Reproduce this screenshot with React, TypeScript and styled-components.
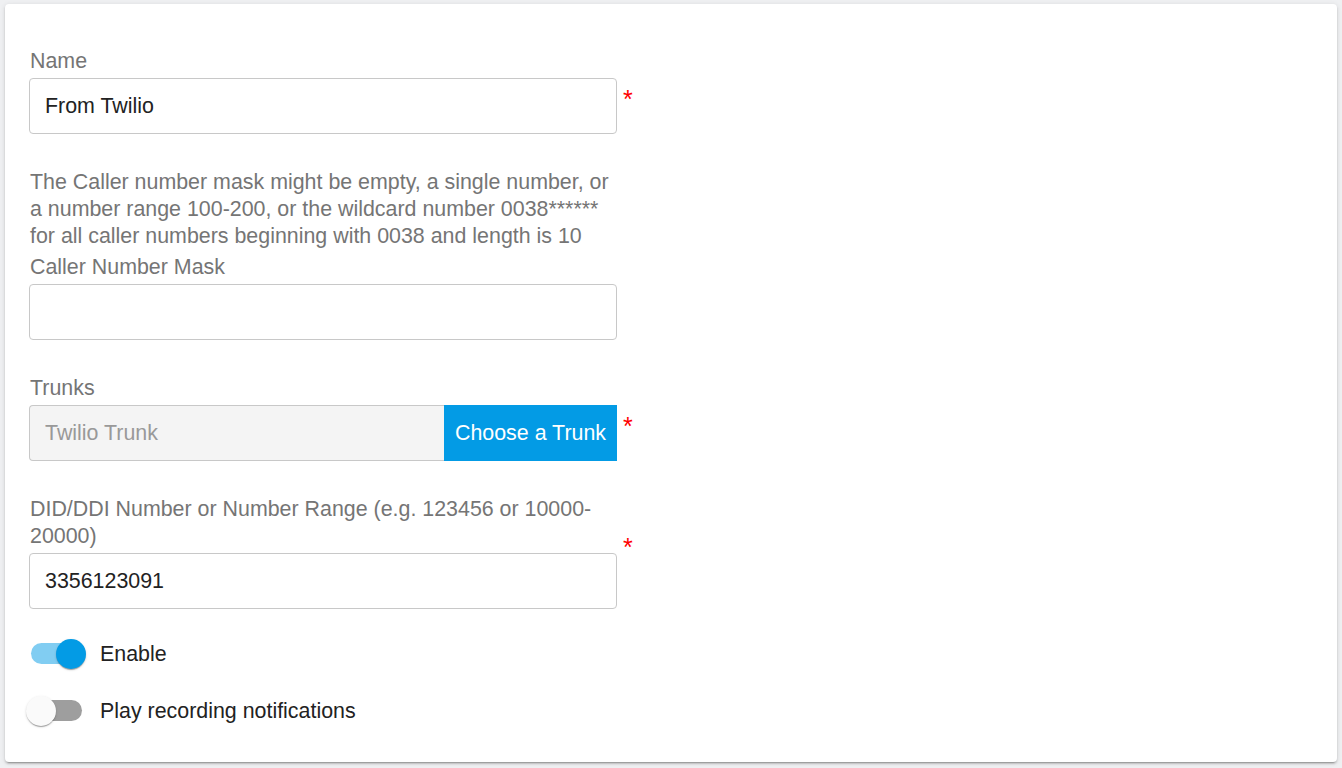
import React from "react";
import styled, { createGlobalStyle } from "styled-components";

const GlobalStyle = createGlobalStyle`
  html, body {
    margin: 0;
    padding: 0;
    background: #eff0f2;
  }
  body {
    font-family: "Liberation Sans", Arial, sans-serif;
  }
  * { box-sizing: border-box; }
`;

const FONT = "21.4px";

const Page = styled.div`
  padding: 4px 5px 6px 5px;
`;

const Card = styled.div`
  background: #fff;
  border-radius: 4px;
  box-shadow: 0 3px 1px -2px rgba(0,0,0,0.2), 0 2px 2px 0 rgba(0,0,0,0.14), 0 1px 5px 0 rgba(0,0,0,0.12);
  padding: 42px 24px 23px 24px;
  font-size: ${FONT};
`;

const FieldRow = styled.div<{ $gap?: number }>`
  display: flex;
  align-items: flex-start;
  margin-bottom: ${(p) => p.$gap ?? 33}px;
`;

const FieldColumn = styled.div`
  width: 588px;
  display: flex;
  flex-direction: column;
`;

const Label = styled.label`
  display: block;
  color: #757575;
  font-size: ${FONT};
  line-height: 27px;
  padding: 2px 0 0 1px;
  margin-bottom: 3px;
`;

const HelpText = styled.div`
  color: #757575;
  font-size: ${FONT};
  line-height: 27px;
  padding: 2px 0 0 1px;
  margin-bottom: 2px;
`;

const Input = styled.input`
  width: 100%;
  height: 56px;
  border: 1px solid #c8c8c8;
  border-radius: 4px;
  padding: 0 15px;
  font-family: "Liberation Sans", Arial, sans-serif;
  font-size: ${FONT};
  color: #222;
  background: #fff;
  outline: none;
`;

const InputGroup = styled.div`
  display: flex;
  height: 56px;
`;

const GroupInput = styled(Input)`
  flex: 1;
  min-width: 0;
  border-radius: 4px 0 0 4px;
  border-right: none;
  background: #f4f4f4;
  color: #999;
`;

const ChooseButton = styled.button`
  height: 56px;
  border: none;
  border-radius: 0;
  background: #039be5;
  color: #fff;
  font-family: "Liberation Sans", Arial, sans-serif;
  font-size: ${FONT};
  padding: 0 11px;
  cursor: pointer;
  white-space: nowrap;
`;

const Required = styled.span`
  color: #ff0000;
  font-size: 25px;
  line-height: 25px;
  margin-top: 41px;
  margin-left: 6px;
`;

const SwitchRow = styled.label<{ $first?: boolean }>`
  display: flex;
  align-items: center;
  height: 57px;
  margin-top: ${(p) => (p.$first ? 16 : 0)}px;
  cursor: pointer;
`;

const Track = styled.span<{ $on: boolean }>`
  position: relative;
  display: block;
  width: 51px;
  height: 21px;
  border-radius: 10.5px;
  margin: 0 18px 0 2px;
  background: ${(p) => (p.$on ? "#81cdf2" : "#9e9e9e")};
`;

const Thumb = styled.span<{ $on: boolean }>`
  position: absolute;
  top: -4.5px;
  left: ${(p) => (p.$on ? 25 : -5)}px;
  width: 30px;
  height: 30px;
  border-radius: 50%;
  background: ${(p) => (p.$on ? "#039be5" : "#fafafa")};
  box-shadow: 0 2px 1px -1px rgba(0,0,0,0.2), 0 1px 1px 0 rgba(0,0,0,0.14), 0 1px 3px 0 rgba(0,0,0,0.12);
`;

const SwitchText = styled.span`
  color: #222;
  font-size: ${FONT};
  padding-top: 1px;
`;

function Toggle({ on, label, first }: { on: boolean; label: string; first?: boolean }) {
  return (
    <SwitchRow $first={first}>
      <Track $on={on}>
        <Thumb $on={on} />
      </Track>
      <SwitchText>{label}</SwitchText>
    </SwitchRow>
  );
}

export default function App() {
  return (
    <>
      <GlobalStyle />
      <Page>
        <Card>
          <FieldRow>
            <FieldColumn>
              <Label>Name</Label>
              <Input defaultValue="From Twilio" />
            </FieldColumn>
            <Required>*</Required>
          </FieldRow>

          <FieldRow>
            <FieldColumn>
              <HelpText>
                The Caller number mask might be empty, a single number, or a number range 100-200, or the wildcard number 0038****** for all caller numbers beginning with 0038 and length is 10
              </HelpText>
              <Label>Caller Number Mask</Label>
              <Input defaultValue="" />
            </FieldColumn>
          </FieldRow>

          <FieldRow>
            <FieldColumn>
              <Label>Trunks</Label>
              <InputGroup>
                <GroupInput readOnly value="Twilio Trunk" />
                <ChooseButton type="button">Choose a Trunk</ChooseButton>
              </InputGroup>
            </FieldColumn>
            <Required>*</Required>
          </FieldRow>

          <FieldRow $gap={0}>
            <FieldColumn>
              <Label>DID/DDI Number or Number Range (e.g. 123456 or 10000-20000)</Label>
              <Input defaultValue="3356123091" />
            </FieldColumn>
            <Required>*</Required>
          </FieldRow>

          <Toggle on={true} label="Enable" first />
          <Toggle on={false} label="Play recording notifications" />
        </Card>
      </Page>
    </>
  );
}
